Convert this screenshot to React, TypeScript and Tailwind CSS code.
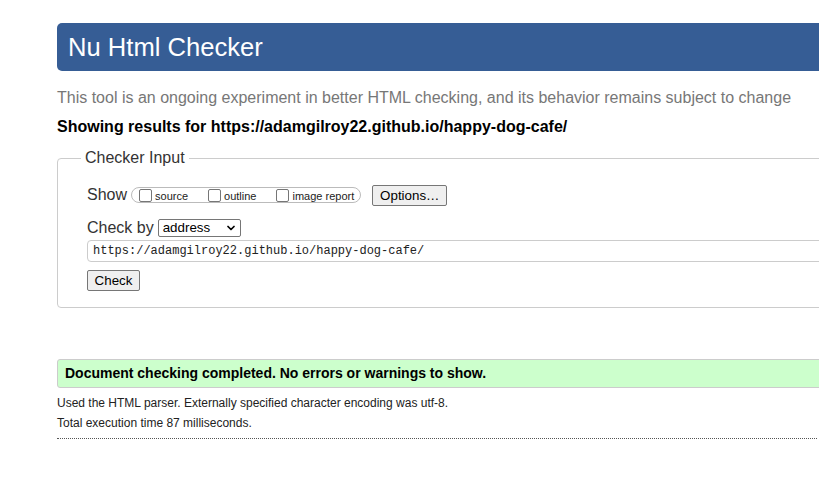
import { ChevronDown } from 'lucide-react';

const sans = "font-['Liberation_Sans',Arial,sans-serif]";

function Box({ label }: { label: string }) {
  return (
    <span className="flex items-center">
      <span className="w-[13px] h-[13px] border border-[#767676] rounded-[2px] bg-white" />
      <span className="ml-[3px] mt-[2px] text-[11px] leading-[16px] text-[#222]">{label}</span>
    </span>
  );
}

export default function App() {
  return (
    <div className={`${sans} w-full min-h-[477px] overflow-hidden bg-white text-black`}>
      <div className="pl-[57px] pt-[23px] w-[1000px]">
        <header className="h-[48px] w-[900px] rounded-[5px] bg-[#365d95] pl-[11px]">
          <h1 className="text-[25.6px] leading-[48px] text-white">Nu Html Checker</h1>
        </header>

        <p className="mt-[18px] text-[16px] leading-[18px] text-[#777]">
          This tool is an ongoing experiment in better HTML checking, and its behavior remains subject to change
        </p>
        <h2 className="mt-[11px] text-[16px] leading-[18px] font-bold">
          Showing results for https://adamgilroy22.github.io/happy-dog-cafe/
        </h2>

        <fieldset className="mt-[13px] w-[900px] border border-[#ccc] rounded-[4px] pb-[16px]">
          <legend className="ml-[23px] px-[4px] text-[16px] leading-[18px] text-[#333]">Checker Input</legend>

          <div className="pl-[29px]">
            <div className="mt-[17px] h-[22px] flex items-center">
              <span className="text-[16px] text-[#333]">Show</span>
              <span className="ml-[4px] h-[16px] flex items-center gap-[20px] border border-[#bbb] rounded-full pl-[7px] pr-[6px]">
                <Box label="source" />
                <Box label="outline" />
                <Box label="image report" />
              </span>
              <button className="ml-[11px] w-[75px] h-[21px] bg-[#efefef] border border-[#767676] rounded-[2px] text-[13.33px] text-black">
                Options…
              </button>
            </div>

            <div className="mt-[12px] h-[20px] flex items-center">
              <span className="text-[16px] text-[#333]">Check by</span>
              <span className="ml-[4px] w-[83px] h-[18px] flex items-center justify-between border border-[#767676] rounded-[2px] pl-[4px] pr-[3px] text-[13.33px]">
                address
                <ChevronDown size={12} strokeWidth={3.5} />
              </span>
            </div>

            <div className="mt-[2px] h-[22px] border border-[#ccc] rounded-[4px] flex items-center pl-[5px] font-['Liberation_Mono',monospace] text-[12px] text-[#222]">
              https://adamgilroy22.github.io/happy-dog-cafe/
            </div>

            <button className="mt-[8px] block w-[53px] h-[21px] bg-[#efefef] border border-[#767676] rounded-[2px] text-[13.33px] text-black">
              Check
            </button>
          </div>
        </fieldset>

        <div className="mt-[51px] w-[900px] h-[29px] bg-[#ccffcc] border border-[#ccc] rounded-[3px] flex items-center pl-[7px]">
          <span className="text-[14px] font-bold">Document checking completed. No errors or warnings to show.</span>
        </div>

        <p className="mt-[8px] text-[12px] leading-[15px] text-[#222]">
          Used the HTML parser. Externally specified character encoding was utf-8.
        </p>
        <p className="mt-[5px] text-[12px] leading-[15px] text-[#222]">Total execution time 87 milliseconds.</p>
        <div className="mt-[7px] w-[760px] border-b border-dotted border-[#555]" />
      </div>
    </div>
  );
}
